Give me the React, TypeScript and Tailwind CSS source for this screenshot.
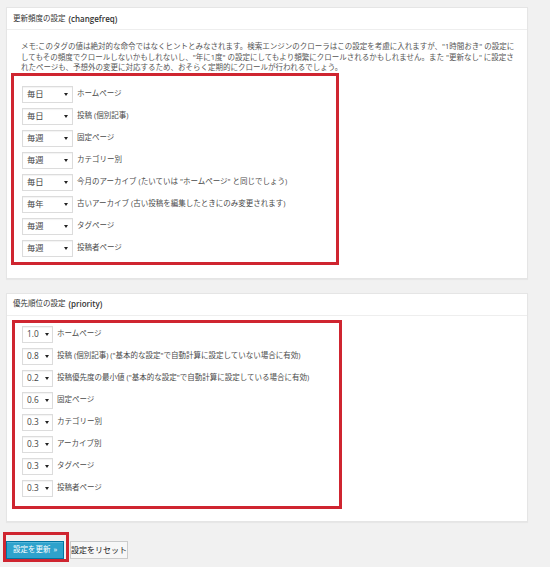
import React from 'react'

const FONT = { fontFamily: '"Open Sans", "Noto Sans CJK JP", sans-serif' }

interface Row {
  value: string
  label: string
}

const freqRows: Row[] = [
  { value: '毎日', label: 'ホームページ' },
  { value: '毎日', label: '投稿 (個別記事)' },
  { value: '毎週', label: '固定ページ' },
  { value: '毎週', label: 'カテゴリー別' },
  { value: '毎日', label: '今月のアーカイブ (たいていは "ホームページ" と同じでしょう)' },
  { value: '毎年', label: '古いアーカイブ (古い投稿を編集したときにのみ変更されます)' },
  { value: '毎週', label: 'タグページ' },
  { value: '毎週', label: '投稿者ページ' },
]

const priorityRows: Row[] = [
  { value: '1.0', label: 'ホームページ' },
  { value: '0.8', label: '投稿 (個別記事) ("基本的な設定"で自動計算に設定していない場合に有効)' },
  { value: '0.2', label: '投稿優先度の最小値 ("基本的な設定"で自動計算に設定している場合に有効)' },
  { value: '0.6', label: '固定ページ' },
  { value: '0.3', label: 'カテゴリー別' },
  { value: '0.3', label: 'アーカイブ別' },
  { value: '0.3', label: 'タグページ' },
  { value: '0.3', label: '投稿者ページ' },
]

function FakeSelect({ value, wide }: { value: string; wide?: boolean }) {
  return (
    <div
      className={`flex items-center justify-between h-[17px] bg-white border border-[#dcdcdc] shadow-[inset_0_1px_1px_rgba(0,0,0,0.05)] pl-[4px] ${
        wide ? 'w-[51px] pr-[4px]' : 'w-[31px] pr-[3px]'
      }`}
    >
      <span className="text-[8.3px] text-[#444] leading-none">{value}</span>
      <svg width="4" height="3" viewBox="0 0 4 3" className="shrink-0">
        <path d="M0 0 L4 0 L2 3 Z" fill="#222" />
      </svg>
    </div>
  )
}

function Panel({ title, latin, children }: { title: string; latin: string; children: React.ReactNode }) {
  return (
    <div className="w-[522px] bg-white border border-[#e5e5e5] shadow-[0_1px_1px_rgba(0,0,0,0.04)]">
      <div className="h-[22px] flex items-center pl-[6px] border-b border-[#eeeeee] text-[7.5px] text-[#333]">
        {title}
        <span className="ml-[3px] text-[8px] font-semibold">{latin}</span>
      </div>
      {children}
    </div>
  )
}

export default function App() {
  return (
    <div className="w-[550px] h-[567px] bg-[#f1f1f1] overflow-hidden pl-[6px] pt-[7px]" style={FONT}>
      <Panel title="更新頻度の設定" latin="(changefreq)">
        <div className="pl-[4px] pt-[11px] pb-[13px]">
          <div className="pl-[10px] text-[7.5px] leading-[10.5px] text-[#555] whitespace-nowrap">
            <div>メモ:このタグの値は絶対的な命令ではなくヒントとみなされます。検索エンジンのクローラはこの設定を考慮に入れますが、"1時間おき" の設定に</div>
            <div>してもその頻度でクロールしないかもしれないし、"年に1度" の設定にしてもより頻繁にクロールされるかもしれません。また "更新なし" に設定さ</div>
            <div>れたページも、予想外の変更に対応するため、おそらく定期的にクロールが行われるでしょう。</div>
          </div>
          <div className="w-[328px] border-[3px] border-[#cf2530] pl-[8px] pt-[10px] pb-[5px] flex flex-col gap-[5px]">
            {freqRows.map((r, i) => (
              <div key={i} className="flex items-center gap-[4px]">
                <FakeSelect value={r.value} wide />
                <span className="text-[7.5px] text-[#4a4a4a] whitespace-nowrap">{r.label}</span>
              </div>
            ))}
          </div>
        </div>
      </Panel>

      <div className="h-[14px]" />

      <Panel title="優先順位の設定" latin="(priority)">
        <div className="pl-[5px] pt-[4px] pb-[12px]">
          <div className="w-[330px] border-[3px] border-[#cf2530] pl-[7px] pt-[3px] pb-[9px] flex flex-col gap-[5px]">
            {priorityRows.map((r, i) => (
              <div key={i} className="flex items-center gap-[4px]">
                <FakeSelect value={r.value} />
                <span className="text-[7.5px] text-[#4a4a4a] whitespace-nowrap">{r.label}</span>
              </div>
            ))}
          </div>
        </div>
      </Panel>

      <div className="flex items-end mt-[10px] -ml-[3px]">
        <div className="border-[3px] border-[#cf2530] pt-[6px] pr-[2px] pb-[0px]">
          <button className="w-[58px] h-[18px] bg-[#2ea2cc] border border-[#0074a2] text-white text-[7.5px] flex items-center justify-center gap-[3px] shadow-[inset_0_1px_0_rgba(120,200,230,0.5)]">
            <span>設定を更新</span>
            <span>»</span>
          </button>
        </div>
        <button className="ml-[1px] mb-[3px] w-[58px] h-[18px] bg-[#f7f7f7] border border-[#cccccc] text-[#222] text-[8px] flex items-center justify-center">
          設定をリセット
        </button>
      </div>
    </div>
  )
}
